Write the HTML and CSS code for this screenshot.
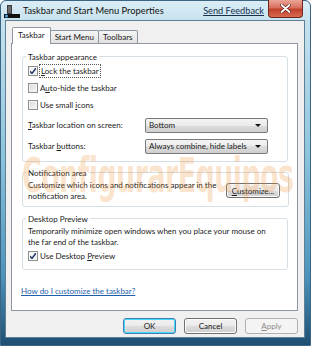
FILE: index.html
```html
<!DOCTYPE html>
<html lang="en">
<head>
  <meta charset="UTF-8" />
  <title>Taskbar and Start Menu Properties</title>
  <link rel="stylesheet" href="styles.css">
</head>
<body>
  <div class="window">
    <div class="titlebar">
      <svg class="app-icon" width="16" height="14" viewBox="0 0 16 14">
        <rect x="3" y="1" width="5" height="9" fill="#3b3b3b"/>
        <rect x="4" y="2" width="3" height="7" fill="#6b6b6b"/>
        <rect x="0" y="10" width="16" height="4" fill="#111"/>
        <circle cx="2.5" cy="12" r="1.5" fill="#4aa3df"/>
      </svg>
      <span class="title">Taskbar and Start Menu Properties</span>
      <a class="feedback" href="#">Send Feedback</a>
      <div class="close">
        <svg width="11" height="9" viewBox="0 0 11 9">
          <path d="M1.5 1 L9.5 8 M9.5 1 L1.5 8" stroke="#5a1a12" stroke-width="3.2" stroke-linecap="round"/>
          <path d="M1.5 1 L9.5 8 M9.5 1 L1.5 8" stroke="#fff" stroke-width="1.8" stroke-linecap="round"/>
        </svg>
      </div>
    </div>

    <div class="client">
      <div class="tabs">
        <div class="tab active">Taskbar</div>
        <div class="tab">Start Menu</div>
        <div class="tab">Toolbars</div>
      </div>

      <div class="panel">
        <fieldset class="group group-appearance">
          <legend>Taskbar appearance</legend>
          <div class="check"><span class="box checked"></span><span class="focus"><u>L</u>ock the taskbar</span></div>
          <div class="check"><span class="box"></span><span>A<u>u</u>to-hide the taskbar</span></div>
          <div class="check"><span class="box"></span><span>Use small <u>i</u>cons</span></div>
          <div class="field first">
            <span class="field-label"><u>T</u>askbar location on screen:</span>
            <div class="select">Bottom<span class="arrow"></span></div>
          </div>
          <div class="field">
            <span class="field-label">Taskbar <u>b</u>uttons:</span>
            <div class="select">Always combine, hide labels<span class="arrow"></span></div>
          </div>
        </fieldset>

        <fieldset class="group">
          <legend>Notification area</legend>
          <div class="desc-row">
            <p class="desc">Customize which icons and notifications appear in the notification area.</p>
            <button class="btn small"><u>C</u>ustomize...</button>
          </div>
        </fieldset>

        <fieldset class="group">
          <legend>Desktop Preview</legend>
          <p class="desc wide">Temporarily minimize open windows when you place your mouse on the far end of the taskbar.</p>
          <div class="check"><span class="box checked"></span><span>Use Desktop <u>P</u>review</span></div>
        </fieldset>

        <a class="help" href="#">How do I customize the taskbar?</a>
      </div>

      <div class="buttons">
        <button class="btn default">OK</button>
        <button class="btn">Cancel</button>
        <button class="btn disabled"><u>A</u>pply</button>
      </div>
    </div>

    <div class="watermark">ConfigurarEquipos</div>
  </div>
</body>
</html>
```

FILE: styles.css
```css
* {
  box-sizing: border-box;
}

body {
  margin: 0;
  width: 311px;
  height: 346px;
  overflow: hidden;
  font-family: 'Lato', sans-serif;
  font-size: 8px;
  color: #1a1a1a;
}

.window {
  position: relative;
  width: 311px;
  height: 346px;
  display: flex;
  flex-direction: column;
  background: linear-gradient(to bottom, #dbedf6 0, #c6e2ef 20px, #8cc4dc 45%, #4c93bb 80%, #1f4f72 100%);
  border: 1px solid #3b6582;
  border-radius: 6px 6px 0 0;
}

.titlebar {
  height: 20px;
  display: flex;
  align-items: flex-start;
}

.app-icon {
  margin: 3px 0 0 3px;
}

.title {
  margin: 4px 0 0 3px;
  font-size: 9.3px;
  line-height: 12px;
  color: #111;
}

.feedback {
  margin: 4px 0 0 auto;
  font-size: 9.2px;
  line-height: 12px;
  color: #16304d;
}

.close {
  width: 35px;
  height: 18px;
  margin: -1px 7px 0 4px;
  display: flex;
  align-items: center;
  justify-content: center;
  background: linear-gradient(to bottom, #eaa597 0, #d9705f 45%, #c2402c 55%, #d76a4f 100%);
  border: 1px solid #70281d;
  border-top: none;
  border-radius: 0 0 4px 4px;
}

.client {
  height: 317px;
  margin: 0 6px 8px 5px;
  padding-top: 6px;
  background: #f0f0f0;
  box-shadow: 0 0 0 1px #5e7f94;
}

/* Tabs */
.tabs {
  position: relative;
  z-index: 1;
  height: 16px;
  margin-left: 6px;
  display: flex;
  align-items: flex-end;
}

.tab {
  height: 13px;
  padding: 0 4px;
  line-height: 13px;
  border: 1px solid #8e979f;
  border-bottom: none;
  background: linear-gradient(to bottom, #f4f4f4, #e2e2e2);
  border-radius: 2px 2px 0 0;
}

.tab + .tab {
  margin-left: -1px;
}

.tab.active {
  height: 17px;
  margin-bottom: -1px;
  padding: 0 5px;
  line-height: 15px;
  background: #fff;
}

.panel {
  height: 268px;
  margin: 0 6px 0 5px;
  padding: 0 9px 0 10px;
  background: #fff;
  border: 1px solid #8e979f;
}

/* Group boxes */
.group {
  margin: 5px 0 0;
  padding: 0 5px 4px;
  border: 1px solid #d5dfe5;
  border-radius: 3px;
}

.group-appearance {
  margin-top: 7px;
  padding-bottom: 7px;
}

.group:last-of-type {
  margin-top: 6px;
}

legend {
  margin-left: -2px;
  padding: 0 2px;
  line-height: 12px;
}

.check {
  height: 17px;
  display: flex;
  align-items: center;
}

.box {
  width: 10px;
  height: 10px;
  margin-right: 2px;
  border: 1px solid #8f8f8f;
  background: linear-gradient(135deg, #d6d6d6, #fbfbfb);
  box-shadow: inset 0 0 0 1px #f4f4f4;
}

.box.checked {
  background: #f4f4f4 url("data:image/svg+xml;utf8,<svg xmlns='http://www.w3.org/2000/svg' width='8' height='8'><path d='M1 4.2 L3 6.5 L7 1' fill='none' stroke='%232c3f6b' stroke-width='1.6'/></svg>") center / 8px 8px no-repeat;
}

.focus {
  margin-left: -1px;
  padding: 1px;
  border: 1px dotted #555;
}

.field {
  height: 15px;
  margin-top: 6px;
  display: flex;
  align-items: center;
}

.field.first {
  margin-top: 4px;
}

.field-label {
  width: 117px;
}

.select {
  position: relative;
  width: 123px;
  height: 15px;
  padding-left: 3px;
  line-height: 13px;
  border: 1px solid #7a7a7a;
  border-radius: 2px;
  background: linear-gradient(to bottom, #f4f4f4 0, #ebebeb 50%, #dddddd 50%, #cfcfcf 100%);
}

.arrow {
  position: absolute;
  right: 6px;
  top: 5px;
  border-left: 3px solid transparent;
  border-right: 3px solid transparent;
  border-top: 3px solid #111;
}

.desc-row {
  display: flex;
  align-items: center;
  padding-top: 1px;
}

.desc {
  margin: 0;
  width: 198px;
  line-height: 11px;
}

.desc.wide {
  width: 250px;
  padding-top: 1px;
}

.btn {
  width: 53px;
  height: 16px;
  padding: 0;
  font-family: inherit;
  font-size: 8px;
  color: #1a1a1a;
  border: 1px solid #707070;
  border-radius: 3px;
  background: linear-gradient(to bottom, #f2f2f2 0, #ebebeb 50%, #dddddd 50%, #cfcfcf 100%);
  box-shadow: inset 0 0 0 1px #fcfcfc;
}

.btn.small {
  width: 54px;
  height: 15px;
  margin: 0 3px 0 auto;
}

.btn.default {
  border-color: #3c7fb1;
  box-shadow: inset 0 0 0 1px #48d8fb;
}

.btn.disabled {
  color: #8a8a8a;
  border-color: #adb2b5;
  background: #f4f4f4;
  box-shadow: none;
}

.help {
  display: block;
  margin: 16px 0 0 -1px;
  line-height: 11px;
  color: #1f5ea8;
}

.buttons {
  margin: 7px 6px 0 0;
  display: flex;
  justify-content: flex-end;
  gap: 8px;
}

.watermark {
  position: absolute;
  left: 21px;
  top: 146px;
  font-family: 'DejaVu Sans', sans-serif;
  font-weight: bold;
  font-size: 48px;
  line-height: 56px;
  letter-spacing: -1px;
  color: rgba(240, 150, 60, 0.26);
  transform: scaleX(0.56);
  transform-origin: left top;
  white-space: nowrap;
  pointer-events: none;
}
```
